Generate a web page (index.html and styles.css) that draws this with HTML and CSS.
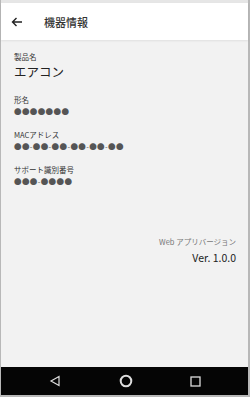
FILE: index.html
```html
<!DOCTYPE html>
<html lang="ja">
<head>
    <meta charset="UTF-8">
    <meta name="viewport" content="width=device-width, initial-scale=1.0">
    <title>機器情報</title>
    <link rel="stylesheet" href="styles.css">
</head>
<body>
    <div class="screen">
        <div class="status"></div>
        <header class="appbar">
            <svg class="back" width="12" height="10" viewBox="0 0 12 10">
                <path d="M11 5H1.5M5.5 1L1.5 5l4 4" fill="none" stroke="#222" stroke-width="1.4"/>
            </svg>
            <h1>機器情報</h1>
        </header>
        <main class="content">
            <div class="item">
                <div class="label">製品名</div>
                <div class="value big">エアコン</div>
            </div>
            <div class="item">
                <div class="label">形名</div>
                <div class="value dots">●●●●●●●</div>
            </div>
            <div class="item">
                <div class="label">MACアドレス</div>
                <div class="value dots">●●-●●-●●-●●-●●-●●</div>
            </div>
            <div class="item">
                <div class="label">サポート識別番号</div>
                <div class="value dots">●●●-●●●●</div>
            </div>
            <div class="version">
                <div class="ver-label">Web アプリバージョン</div>
                <div class="ver-value">Ver. 1.0.0</div>
            </div>
        </main>
        <nav class="navbar">
            <svg width="12" height="12" viewBox="0 0 12 12">
                <path d="M10 1.5v9L2 6z" fill="none" stroke="#ddd" stroke-width="1.2"/>
            </svg>
            <svg width="14" height="14" viewBox="0 0 14 14">
                <circle cx="7" cy="7" r="5.3" fill="none" stroke="#ddd" stroke-width="2"/>
            </svg>
            <svg width="11" height="11" viewBox="0 0 11 11">
                <rect x="1" y="1" width="9" height="9" fill="none" stroke="#ddd" stroke-width="1.3"/>
            </svg>
        </nav>
    </div>
</body>
</html>
```

FILE: styles.css
```css
html, body {
    margin: 0;
    padding: 0;
}
body {
    font-family: "Noto Sans CJK JP", "Noto Sans", sans-serif;
    color: #222;
}
.screen {
    width: 250px;
    height: 397px;
    box-sizing: border-box;
    border-left: 1px solid #b8b8b8;
    border-right: 2px solid #b8b8b8;
    border-bottom: 2px solid #b8b8b8;
    display: flex;
    flex-direction: column;
    background: #f2f2f2;
}
.status {
    height: 3px;
    background: #e6e6e6;
}
.appbar {
    height: 37px;
    background: #fff;
    display: flex;
    align-items: center;
    box-shadow: 0 1px 2px rgba(0, 0, 0, 0.08);
}
.back {
    margin-left: 10px;
}
.appbar h1 {
    margin: 0 0 0 21px;
    font-size: 11px;
    font-weight: 500;
    color: #333;
}
.content {
    flex: 1;
    padding: 11.5px 0 0 13px;
    display: flex;
    flex-direction: column;
}
.item {
    margin-bottom: 11px;
}
.label {
    font-size: 7.5px;
    line-height: 10px;
    color: #333;
}
.value {
    color: #222;
}
.big {
    margin-top: 1px;
    font-size: 12.5px;
    line-height: 18px;
    margin-bottom: 3.5px;
}
.dots {
    font-size: 7.5px;
    line-height: 14px;
    color: #555;
    letter-spacing: 0.4px;
}
.version {
    margin-top: 36px;
    padding-right: 12px;
    text-align: right;
}
.ver-label {
    font-size: 7.5px;
    line-height: 11px;
    color: #777;
}
.ver-value {
    margin-top: 3px;
    font-size: 10.5px;
    line-height: 16px;
    color: #222;
}
.navbar {
    height: 28px;
    background: #050505;
    display: flex;
    align-items: center;
    justify-content: space-between;
    padding: 0 47px 0 48px;
}
```
